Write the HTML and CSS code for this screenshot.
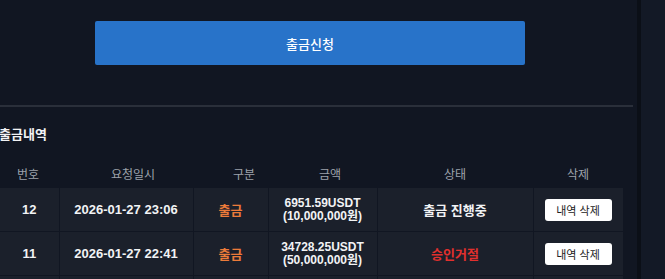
FILE: index.html
```html
<!DOCTYPE html>
<html lang="ko">
<head>
    <meta charset="UTF-8">
    <meta name="viewport" content="width=device-width, initial-scale=1.0">
    <title>출금</title>
    <link rel="stylesheet" href="styles.css">
</head>
<body>
    <div class="main">
        <div class="apply-area">
            <button type="button" class="btn-apply">출금신청</button>
        </div>
        <div class="divider"></div>
        <h3 class="list-title">출금내역</h3>
        <div class="list-head">
            <span>번호</span>
            <span>요청일시</span>
            <span>구분</span>
            <span>금액</span>
            <span>상태</span>
            <span>삭제</span>
        </div>
        <table class="list-table">
            <colgroup>
                <col class="c-no">
                <col class="c-date">
                <col class="c-type">
                <col class="c-amount">
                <col class="c-state">
                <col class="c-del">
            </colgroup>
            <tbody>
                <tr>
                    <td>12</td>
                    <td>2026-01-27 23:06</td>
                    <td class="type-out">출금</td>
                    <td class="amount">6951.59USDT<br>(10,000,000원)</td>
                    <td class="state">출금 진행중</td>
                    <td><button type="button" class="btn-del">내역 삭제</button></td>
                </tr>
                <tr>
                    <td>11</td>
                    <td>2026-01-27 22:41</td>
                    <td class="type-out">출금</td>
                    <td class="amount">34728.25USDT<br>(50,000,000원)</td>
                    <td class="state rejected">승인거절</td>
                    <td><button type="button" class="btn-del">내역 삭제</button></td>
                </tr>
                <tr class="row-more">
                    <td></td>
                    <td></td>
                    <td></td>
                    <td></td>
                    <td></td>
                    <td></td>
                </tr>
            </tbody>
        </table>
    </div>
    <div class="edge"></div>
    <div class="side"></div>
</body>
</html>
```

FILE: styles.css
```css
body {
    margin: 0;
    height: 279px;
    overflow: hidden;
    display: flex;
    background-color: #111622;
    font-family: "Liberation Sans", "Noto Sans CJK KR", sans-serif;
    color: #f2f3f5;
}
.main {
    width: 633px;
    flex: none;
    margin-right: 4px;
}
.edge {
    width: 4px;
    flex: none;
    background-color: #0b0f17;
}
.side {
    flex: 1;
    background-color: #131926;
}
.apply-area {
    padding: 21px 0 40px 95px;
}
.btn-apply {
    display: block;
    width: 430px;
    height: 44px;
    border: none;
    border-radius: 2px;
    background-color: #2873c9;
    color: #ffffff;
    font-family: "Noto Sans CJK KR", sans-serif;
    font-size: 13px;
    font-weight: 500;
    cursor: pointer;
}
.divider {
    height: 2px;
    background-color: #2a2f3a;
}
.list-title {
    margin: 18px 0 0 -1px;
    font-family: "Noto Sans CJK KR", sans-serif;
    font-size: 13px;
    line-height: 18px;
    font-weight: bold;
}
.list-head {
    display: grid;
    grid-template-columns: 56px 154px 68px 104px 146px 100px;
    height: 30px;
    margin-top: 15px;
    align-items: center;
    text-align: center;
    font-family: "Noto Sans CJK KR", sans-serif;
    font-size: 12px;
    color: #9da2ab;
}
.list-table {
    width: 623px;
    table-layout: fixed;
    border-collapse: collapse;
}
.c-no { width: 59px; }
.c-date { width: 134px; }
.c-type { width: 75px; }
.c-amount { width: 109px; }
.c-state { width: 156px; }
.c-del { width: 90px; }
.list-table td {
    height: 43px;
    padding: 0;
    text-align: center;
    vertical-align: middle;
    background-color: #1b202b;
    border: 1px solid #111622;
    font-size: 13px;
    font-weight: bold;
}
.list-table tr:first-child td {
    border-top: none;
}
.list-table td:first-child {
    border-left: none;
}
.type-out {
    color: #ec7b3a;
    font-family: "Noto Sans CJK KR", sans-serif;
}
.amount {
    font-size: 12px !important;
    line-height: 13px;
}
.state {
    font-family: "Noto Sans CJK KR", sans-serif;
}
.rejected {
    color: #e2302e;
}
.btn-del {
    width: 67px;
    height: 22px;
    padding: 0;
    border: none;
    border-radius: 3px;
    background-color: #ffffff;
    color: #222222;
    font-family: "Noto Sans CJK KR", sans-serif;
    font-size: 11px;
    cursor: pointer;
}
```
